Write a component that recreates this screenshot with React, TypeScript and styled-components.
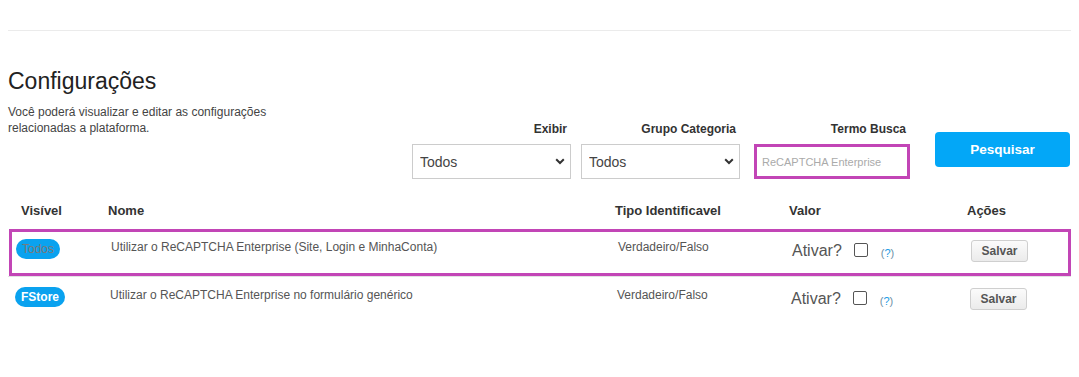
import styled, { createGlobalStyle } from "styled-components";

const GlobalStyle = createGlobalStyle`
  html, body {
    margin: 0;
    padding: 0;
    background: #fff;
  }
  body {
    font-family: "Liberation Sans", Arial, sans-serif;
    color: #333;
  }
`;

type Row = {
  badge: string;
  badgeMuted?: boolean;
  name: string;
  tipo: string;
  highlight?: boolean;
};

const rows: Row[] = [
  {
    badge: "Todos",
    badgeMuted: true,
    name: "Utilizar o ReCAPTCHA Enterprise (Site, Login e MinhaConta)",
    tipo: "Verdadeiro/Falso",
    highlight: true,
  },
  {
    badge: "FStore",
    name: "Utilizar o ReCAPTCHA Enterprise no formulário genérico",
    tipo: "Verdadeiro/Falso",
  },
];

const Chevron = () => (
  <svg width="10" height="7" viewBox="0 0 10 7">
    <path d="M1.2 1.3 L5 5 L8.8 1.3" fill="none" stroke="#333" strokeWidth="2" />
  </svg>
);

export default function App() {
  return (
    <Page>
      <GlobalStyle />
      <Divider />
      <Title>Configurações</Title>

      <Toolbar>
        <Description>
          Você poderá visualizar e editar as configurações relacionadas a plataforma.
        </Description>

        <Filters>
          <Field $ml={0}>
            <Label>Exibir</Label>
            <SelectWrap>
              <Select defaultValue="Todos">
                <option>Todos</option>
              </Select>
              <ChevronBox>
                <Chevron />
              </ChevronBox>
            </SelectWrap>
          </Field>

          <Field $ml={10}>
            <Label>Grupo Categoria</Label>
            <SelectWrap>
              <Select defaultValue="Todos">
                <option>Todos</option>
              </Select>
              <ChevronBox>
                <Chevron />
              </ChevronBox>
            </SelectWrap>
          </Field>

          <Field $ml={14}>
            <Label>Termo Busca</Label>
            <SearchInput placeholder="ReCAPTCHA Enterprise" />
          </Field>

          <SearchButton>Pesquisar</SearchButton>
        </Filters>
      </Toolbar>

      <Table>
        <HeadRow>
          <HeadCell $pl={13}>Visível</HeadCell>
          <HeadCell>Nome</HeadCell>
          <HeadCell>Tipo Identificavel</HeadCell>
          <HeadCell>Valor</HeadCell>
          <HeadCell>Ações</HeadCell>
        </HeadRow>

        {rows.map((r) => (
          <BodyRow key={r.name} $highlight={r.highlight}>
            <Cell $pl={7}>
              <Badge $muted={r.badgeMuted}>{r.badge}</Badge>
            </Cell>
            <Cell>
              <SmallText>{r.name}</SmallText>
            </Cell>
            <Cell>
              <SmallText>{r.tipo}</SmallText>
            </Cell>
            <Cell>
              <Valor>
                <Ativar>Ativar?</Ativar>
                <Check type="checkbox" />
                <Help>
                  (<span>?</span>)
                </Help>
              </Valor>
            </Cell>
            <Cell $pl={11}>
              <SaveButton>Salvar</SaveButton>
            </Cell>
          </BodyRow>
        ))}
      </Table>
    </Page>
  );
}

const Page = styled.div`
  padding: 0 8px;
  width: 1063px;
`;

const Divider = styled.div`
  margin-top: 30px;
  height: 1px;
  background: #ebebeb;
`;

const Title = styled.h1`
  margin: 36px 0 0;
  font-size: 23px;
  line-height: 28px;
  font-weight: normal;
  color: #222;
`;

const Toolbar = styled.div`
  display: flex;
  justify-content: space-between;
  align-items: flex-start;
  margin-top: 9px;
`;

const Description = styled.p`
  margin: 0;
  width: 290px;
  font-size: 12px;
  line-height: 16px;
  color: #444;
`;

const Filters = styled.div`
  display: flex;
  align-items: flex-start;
  margin-top: 18px;
  margin-right: 1px;
`;

const Field = styled.div<{ $ml: number }>`
  display: flex;
  flex-direction: column;
  margin-left: ${(p) => p.$ml}px;
`;

const Label = styled.label`
  font-size: 12px;
  line-height: 14px;
  font-weight: bold;
  color: #333;
  text-align: right;
  padding-right: 4px;
  margin-bottom: 8px;
`;

const SelectWrap = styled.div`
  position: relative;
  width: 159px;
`;

const Select = styled.select`
  appearance: none;
  width: 100%;
  height: 35px;
  box-sizing: border-box;
  border: 1px solid #ccc;
  border-radius: 0;
  background: #fff;
  padding: 0 26px 0 7px;
  font-family: "Liberation Sans", Arial, sans-serif;
  font-size: 14px;
  color: #444;
  outline: none;
`;

const ChevronBox = styled.span`
  position: absolute;
  right: 6px;
  top: 14px;
  display: flex;
  pointer-events: none;
`;

const SearchInput = styled.input`
  width: 156px;
  height: 35px;
  box-sizing: border-box;
  border: 1px solid #ccc;
  outline: 3px solid #c245b6;
  outline-offset: -3px;
  padding: 0 7px;
  font-family: "Liberation Sans", Arial, sans-serif;
  font-size: 11px;
  color: #444;

  &::placeholder {
    color: #aaa;
  }
`;

const SearchButton = styled.button`
  margin-left: 25px;
  margin-top: 10px;
  width: 135px;
  height: 35px;
  border: none;
  border-radius: 4px;
  background: #03a7f7;
  color: #fff;
  font-family: "Liberation Sans", Arial, sans-serif;
  font-size: 13.5px;
  font-weight: bold;
  cursor: pointer;
`;

const Table = styled.div`
  margin-top: 16px;
`;

const columns = "92px 507px 174px 178px 1fr";

const HeadRow = styled.div`
  display: grid;
  grid-template-columns: ${columns};
  padding: 8px 0 9px;
`;

const HeadCell = styled.div<{ $pl?: number }>`
  padding-left: ${(p) => p.$pl ?? 8}px;
  font-size: 13px;
  line-height: 16px;
  font-weight: bold;
  color: #333;
`;

const BodyRow = styled.div<{ $highlight?: boolean }>`
  display: grid;
  grid-template-columns: ${columns};
  height: 48px;
  box-sizing: border-box;
  padding-top: 10px;
  border-top: 1px solid #e2e2e2;
  ${(p) =>
    p.$highlight &&
    `
    border-top-color: transparent;
    box-shadow: inset 0 0 0 3px #c245b6;
    margin-left: 1px;
  `}
`;

const Cell = styled.div<{ $pl?: number }>`
  padding-left: ${(p) => p.$pl ?? 10}px;
  display: flex;
  align-items: flex-start;
`;

const Badge = styled.span<{ $muted?: boolean }>`
  display: inline-flex;
  align-items: center;
  height: 20px;
  padding: 0 6px;
  border-radius: 10px;
  background: #0aa2ef;
  font-size: 12px;
  font-weight: ${(p) => (p.$muted ? "normal" : "bold")};
  color: ${(p) => (p.$muted ? "#7a7a7a" : "#fff")};
`;

const SmallText = styled.span`
  font-size: 12px;
  line-height: 17px;
  color: #555;
`;

const Valor = styled.div`
  display: flex;
  align-items: center;
  height: 22px;
`;

const Ativar = styled.span`
  font-size: 16px;
  line-height: 22px;
  color: #555;
  margin-top: 1px;
`;

const Check = styled.input`
  appearance: none;
  width: 14px;
  height: 14px;
  margin: 0 0 0 12px;
  border: 1px solid #555;
  border-radius: 2px;
  background: #fff;
`;

const Help = styled.span`
  margin-left: 13px;
  margin-top: 5px;
  font-size: 11px;
  color: #6d8fa6;

  span {
    color: #1a9be6;
  }
`;

const SaveButton = styled.button`
  margin-top: 1px;
  width: 57px;
  height: 22px;
  border: 1px solid #cfcfcf;
  border-radius: 3px;
  background: linear-gradient(#fbfbfb, #ebebeb);
  font-family: "Liberation Sans", Arial, sans-serif;
  font-size: 12px;
  font-weight: bold;
  color: #555;
  padding: 0;
`;
